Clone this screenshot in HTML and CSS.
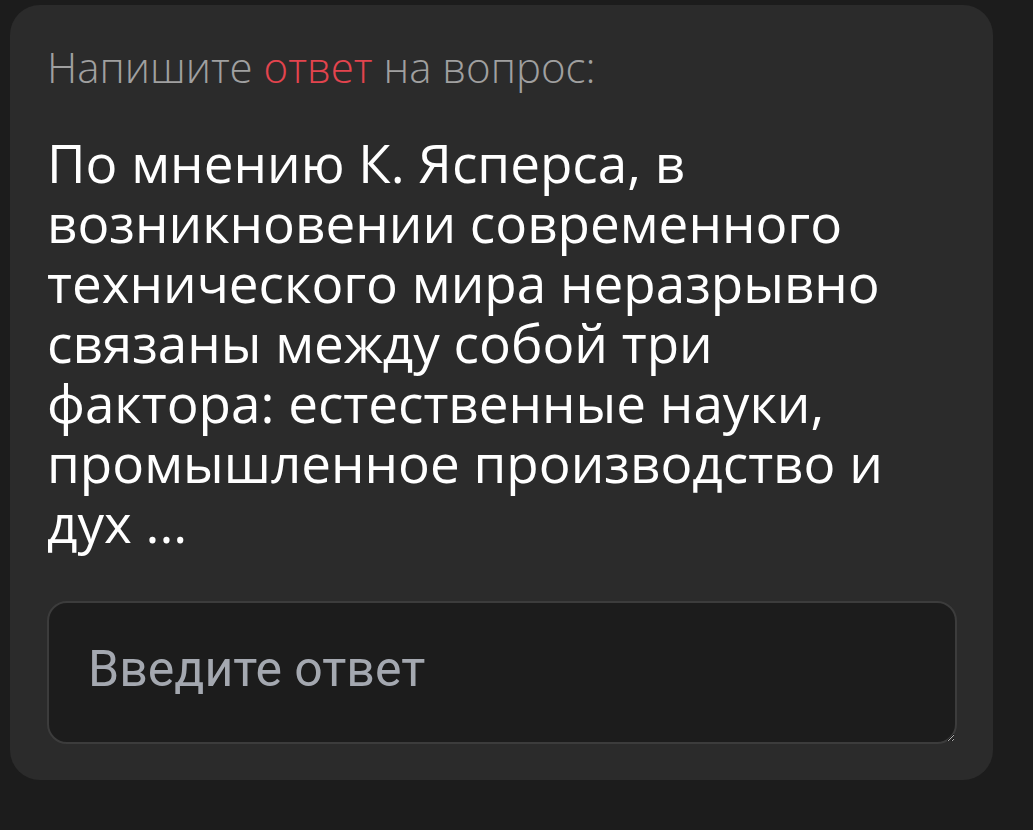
FILE: index.html
```html
<!DOCTYPE html>
<html lang="ru">
<head>
<meta charset="utf-8">
<link rel="stylesheet" href="styles.css">
</head>
<body>
<div class="card">
  <div class="hint">Напишите <span class="accent">ответ</span> на вопрос:</div>
  <div class="question">По мнению К. Ясперса, в возникновении современного технического мира неразрывно связаны между собой три фактора: естественные науки, промышленное производство и дух ...</div>
  <textarea class="answer" placeholder="Введите ответ"></textarea>
</div>
</body>
</html>
```

FILE: styles.css
```css
html, body {
  margin: 0;
  padding: 0;
  background: #1c1c1c;
  height: 100%;
}
body {
  padding: 5px 0 0 10px;
  box-sizing: border-box;
}
.card {
  width: 983px;
  height: 775px;
  box-sizing: border-box;
  background: #2b2b2b;
  border-radius: 30px;
  padding: 40px 36px 0 37px;
  display: flex;
  flex-direction: column;
}
.hint {
  font-family: "Open Sans", sans-serif;
  font-weight: 300;
  font-size: 42px;
  line-height: 44px;
  color: #a0a0a0;
}
.accent {
  color: #e3444e;
}
.question {
  margin-top: 44px;
  font-family: "Open Sans", sans-serif;
  font-size: 53px;
  line-height: 60px;
  color: #ffffff;
  width: 890px;
}
.answer {
  margin-top: 48px;
  width: 910px;
  height: 143px;
  box-sizing: border-box;
  background: #1c1c1c;
  border: 2px solid #3c3c3c;
  border-radius: 20px;
  padding: 37px 39px;
  font-family: Roboto, sans-serif;
  font-size: 50px;
  color: #fff;
  outline: none;
}
.answer::placeholder {
  color: #a4a8b0;
}
```
